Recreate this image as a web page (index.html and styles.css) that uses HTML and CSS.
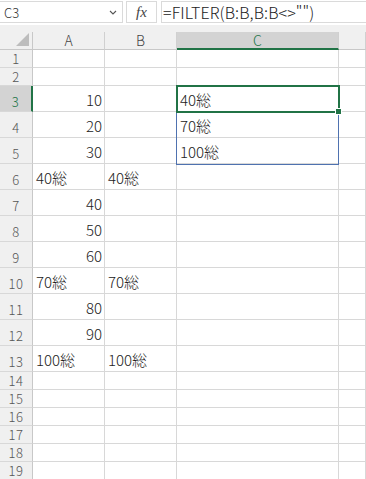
FILE: index.html
```html
<!DOCTYPE html>
<html lang="ja">
<head>
    <meta charset="UTF-8">
    <title>Book1 - Excel</title>
    <link rel="stylesheet" href="styles.css">
</head>
<body>
    <div class="formula-bar">
        <div class="name-box">
            <span>C3</span>
            <svg class="chevron" width="8" height="5" viewBox="0 0 8 5"><path d="M1 1 L4 4 L7 1" fill="none" stroke="#555" stroke-width="1.1"/></svg>
        </div>
        <div class="fx-box">fx</div>
        <div class="formula-input">=FILTER(B:B,B:B&lt;&gt;"")</div>
    </div>
    <div class="band"></div>

    <div class="sheet">
        <!-- header row -->
        <div class="corner"><span class="tri"></span></div>
        <div class="col-head">A</div>
        <div class="col-head">B</div>
        <div class="col-head active">C</div>
        <div class="col-head"></div>

        <div class="row-head">1</div><div class="cell"></div><div class="cell"></div><div class="cell"></div><div class="cell"></div>
        <div class="row-head">2</div><div class="cell"></div><div class="cell"></div><div class="cell"></div><div class="cell"></div>
        <div class="row-head tall active">3</div><div class="cell num">10</div><div class="cell"></div><div class="cell">40総</div><div class="cell"></div>
        <div class="row-head tall">4</div><div class="cell num">20</div><div class="cell"></div><div class="cell">70総</div><div class="cell"></div>
        <div class="row-head tall">5</div><div class="cell num">30</div><div class="cell"></div><div class="cell">100総</div><div class="cell"></div>
        <div class="row-head tall">6</div><div class="cell">40総</div><div class="cell">40総</div><div class="cell"></div><div class="cell"></div>
        <div class="row-head tall">7</div><div class="cell num">40</div><div class="cell"></div><div class="cell"></div><div class="cell"></div>
        <div class="row-head tall">8</div><div class="cell num">50</div><div class="cell"></div><div class="cell"></div><div class="cell"></div>
        <div class="row-head tall">9</div><div class="cell num">60</div><div class="cell"></div><div class="cell"></div><div class="cell"></div>
        <div class="row-head tall">10</div><div class="cell">70総</div><div class="cell">70総</div><div class="cell"></div><div class="cell"></div>
        <div class="row-head tall">11</div><div class="cell num">80</div><div class="cell"></div><div class="cell"></div><div class="cell"></div>
        <div class="row-head tall">12</div><div class="cell num">90</div><div class="cell"></div><div class="cell"></div><div class="cell"></div>
        <div class="row-head tall">13</div><div class="cell">100総</div><div class="cell">100総</div><div class="cell"></div><div class="cell"></div>
        <div class="row-head">14</div><div class="cell"></div><div class="cell"></div><div class="cell"></div><div class="cell"></div>
        <div class="row-head">15</div><div class="cell"></div><div class="cell"></div><div class="cell"></div><div class="cell"></div>
        <div class="row-head">16</div><div class="cell"></div><div class="cell"></div><div class="cell"></div><div class="cell"></div>
        <div class="row-head">17</div><div class="cell"></div><div class="cell"></div><div class="cell"></div><div class="cell"></div>
        <div class="row-head">18</div><div class="cell"></div><div class="cell"></div><div class="cell"></div><div class="cell"></div>
        <div class="row-head">19</div><div class="cell"></div><div class="cell"></div><div class="cell"></div><div class="cell"></div>

        <!-- spill range and active cell sit over the grid -->
        <div class="spill"></div>
        <div class="selection"><span class="handle"></span></div>
    </div>
</body>
</html>
```

FILE: styles.css
```css
body {
    margin: 0;
    width: 366px;
    height: 479px;
    overflow: hidden;
    background: #ffffff;
    font-family: "Noto Sans CJK JP", "Noto Sans", sans-serif;
    font-weight: 300;
    color: #222;
}

/* formula bar */
.formula-bar {
    display: flex;
    height: 25px;
    padding-top: 1px;
    box-sizing: border-box;
    background: #ffffff;
}

.name-box {
    display: flex;
    align-items: center;
    justify-content: space-between;
    width: 123px;
    height: 22px;
    padding: 0 5px 0 4px;
    box-sizing: border-box;
    border: 1px solid #dadada;
    border-left: none;
    font-size: 13px;
    color: #333;
}

.fx-box {
    width: 31px;
    height: 22px;
    margin-left: 3px;
    box-sizing: border-box;
    border: 1px solid #dadada;
    text-align: center;
    font-family: "Liberation Serif", serif;
    font-style: italic;
    font-size: 15px;
    line-height: 20px;
    color: #444;
}

.formula-input {
    flex: 1;
    height: 22px;
    margin-left: 4px;
    padding-left: 1px;
    box-sizing: border-box;
    border: 1px solid #dadada;
    border-right: none;
    font-size: 16px;
    line-height: 20px;
    letter-spacing: 0.1px;
    white-space: nowrap;
    overflow: hidden;
}

.band {
    height: 7px;
    background: #f0f0f0;
}

/* sheet grid */
.sheet {
    position: relative;
    display: grid;
    grid-template-columns: 33px 72px 72px 162px 27px;
    grid-template-rows: 18px 18px 18px repeat(11, 26px) repeat(6, 18px);
}

.sheet > div {
    box-sizing: border-box;
}

.corner {
    position: relative;
    background: #f0f0f0;
    border-right: 1px solid #c8c8c8;
    border-bottom: 1px solid #c8c8c8;
}

.tri {
    position: absolute;
    right: 3px;
    bottom: 3px;
    width: 0;
    height: 0;
    border-left: 13px solid transparent;
    border-bottom: 13px solid #bdbdbd;
}

.col-head {
    background: #f0f0f0;
    border-right: 1px solid #d0d0d0;
    border-bottom: 1px solid #c8c8c8;
    text-align: center;
    font-size: 14px;
    line-height: 17px;
    color: #444;
}

.col-head.active {
    background: #d3d3d3;
    color: #217346;
    border-bottom: 2px solid #217346;
}

.row-head {
    display: flex;
    align-items: flex-end;
    justify-content: center;
    padding-bottom: 1px;
    background: #f0f0f0;
    border-right: 1px solid #c8c8c8;
    border-bottom: 1px solid #d8d8d8;
    font-size: 13px;
    line-height: 15px;
    letter-spacing: 0.6px;
    color: #555;
}

.row-head.tall {
    padding-bottom: 2px;
}

.row-head.active {
    background: #d3d3d3;
    color: #217346;
    border-right: 2px solid #217346;
}

.cell {
    display: flex;
    align-items: flex-end;
    padding: 0 2px 2px 3px;
    border-right: 1px solid #d8d8d8;
    border-bottom: 1px solid #d8d8d8;
    font-size: 15px;
    line-height: 18px;
    color: #222;
    white-space: nowrap;
}

.cell.num {
    justify-content: flex-end;
}

/* overlays */
.spill {
    position: absolute;
    left: 176px;
    top: 54px;
    width: 163px;
    height: 79px;
    border: 1px solid #4f72b0;
    box-sizing: border-box;
}

.selection {
    position: absolute;
    left: 176px;
    top: 53px;
    width: 164px;
    height: 28px;
    border: 2px solid #217346;
    box-sizing: border-box;
}

.handle {
    position: absolute;
    right: -4px;
    bottom: -4px;
    width: 5px;
    height: 5px;
    background: #217346;
    border: 1px solid #ffffff;
}
```
